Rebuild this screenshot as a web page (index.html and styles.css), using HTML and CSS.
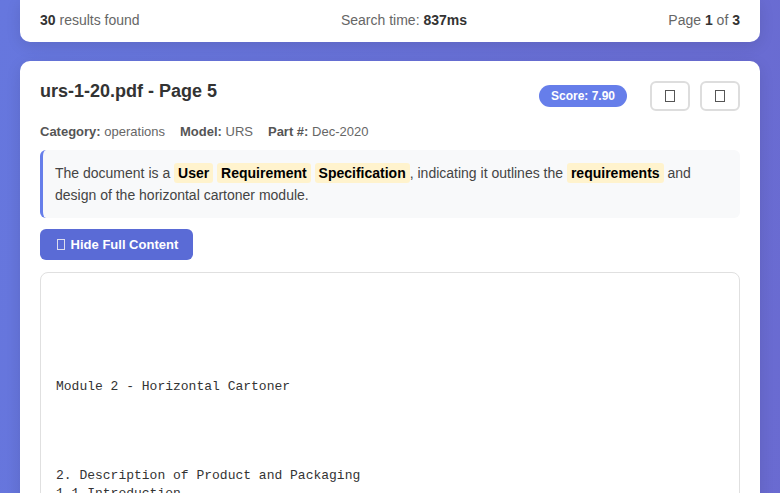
FILE: index.html
```html
<!DOCTYPE html>
<html>
<head>
<meta charset="utf-8">
<link rel="stylesheet" href="styles.css">
</head>
<body>
<div class="container">
  <div class="stats">
    <div><b>30</b> results found</div>
    <div>Search time: <b>837ms</b></div>
    <div>Page <b>1</b> of <b>3</b></div>
  </div>
  <div class="result">
    <div class="result-head">
      <h2 class="title">urs-1-20.pdf - Page 5</h2>
      <div class="actions">
        <span class="score">Score: 7.90</span>
        <button class="icon-btn"><span class="tofu"></span></button>
        <button class="icon-btn"><span class="tofu"></span></button>
      </div>
    </div>
    <div class="meta">
      <span><b>Category:</b> operations</span>
      <span><b>Model:</b> URS</span>
      <span><b>Part #:</b> Dec-2020</span>
    </div>
    <div class="summary">The document is a <mark>User</mark> <mark>Requirement</mark> <mark>Specification</mark>, indicating it outlines the <mark>requirements</mark> and design of the horizontal cartoner module.</div>
    <button class="toggle"><span class="tofu small"></span> Hide Full Content</button>
    <pre class="content">





Module 2 - Horizontal Cartoner




2. Description of Product and Packaging
1.1 Introduction
</pre>
  </div>
</div>
</body>
</html>
```

FILE: styles.css
```css
html {
  background: linear-gradient(100deg, #6677de 0%, #6a6ad0 100%);
  min-height: 100%;
}
body {
  margin: 0;
  font-family: "Liberation Sans", Arial, sans-serif;
  color: #333;
}
.container {
  padding: 0 20px 20px;
  display: flex;
  flex-direction: column;
  gap: 19px;
}
.stats {
  background: #fff;
  border-radius: 0 0 10px 10px;
  height: 42px;
  padding: 0 20px 2px;
  display: flex;
  justify-content: space-between;
  align-items: center;
  font-size: 14px;
  color: #666;
  box-shadow: 0 4px 15px rgba(0,0,0,0.1);
  box-sizing: border-box;
}
.stats b { color: #333; }
.result {
  background: #fff;
  border-radius: 10px;
  padding: 20px;
  box-shadow: 0 4px 15px rgba(0,0,0,0.1);
  min-height: 600px;
}
.result-head {
  display: flex;
  justify-content: space-between;
  align-items: flex-start;
}
.title {
  margin: 0;
  font-size: 18px;
  font-weight: bold;
  color: #333;
  line-height: 21px;
}
.actions {
  display: flex;
  align-items: center;
  gap: 10px;
}
.score {
  background: #667eea;
  color: #fff;
  font-size: 12px;
  font-weight: bold;
  padding: 4px 12px;
  border-radius: 12px;
  margin-right: 13px;
  line-height: 14px;
}
.icon-btn {
  width: 40px;
  height: 30px;
  border: 2px solid #ddd;
  border-radius: 6px;
  background: #fff;
  display: flex;
  align-items: center;
  justify-content: center;
  padding: 0;
}
.tofu {
  display: inline-block;
  width: 8px;
  height: 10px;
  border: 1px solid #555;
}
.tofu.small {
  border-color: #dde;
  width: 6px;
  height: 9px;
  vertical-align: -1px;
  margin-right: 2px;
}
.meta {
  display: flex;
  gap: 15px;
  font-size: 13px;
  color: #666;
  margin-top: 13px;
}
.meta b { color: #555; }
.summary {
  margin-top: 11px;
  background: #f8f9fa;
  border-left: 3px solid #667eea;
  border-radius: 6px;
  padding: 12px 15px 12px 12px;
  font-size: 14px;
  line-height: 22px;
  color: #444;
}
mark {
  background: #fff3cd;
  color: #000;
  font-weight: bold;
  padding: 2px 4px;
  border-radius: 3px;
}
.toggle {
  margin-top: 11px;
  background: #5a6bd6;
  color: #fff;
  border: none;
  border-radius: 6px;
  height: 31px;
  padding: 0 15px 0 17px;
  font-family: "Liberation Sans", Arial, sans-serif;
  font-size: 13px;
  font-weight: bold;
  display: block;
}
.content {
  margin: 12px 0 0;
  border: 1px solid #e0e0e0;
  border-radius: 8px;
  padding: 16px 15px 15px;
  font-family: "Liberation Mono", "Courier New", monospace;
  font-size: 13px;
  line-height: 17.8px;
  color: #333;
  white-space: pre-wrap;
}
```
